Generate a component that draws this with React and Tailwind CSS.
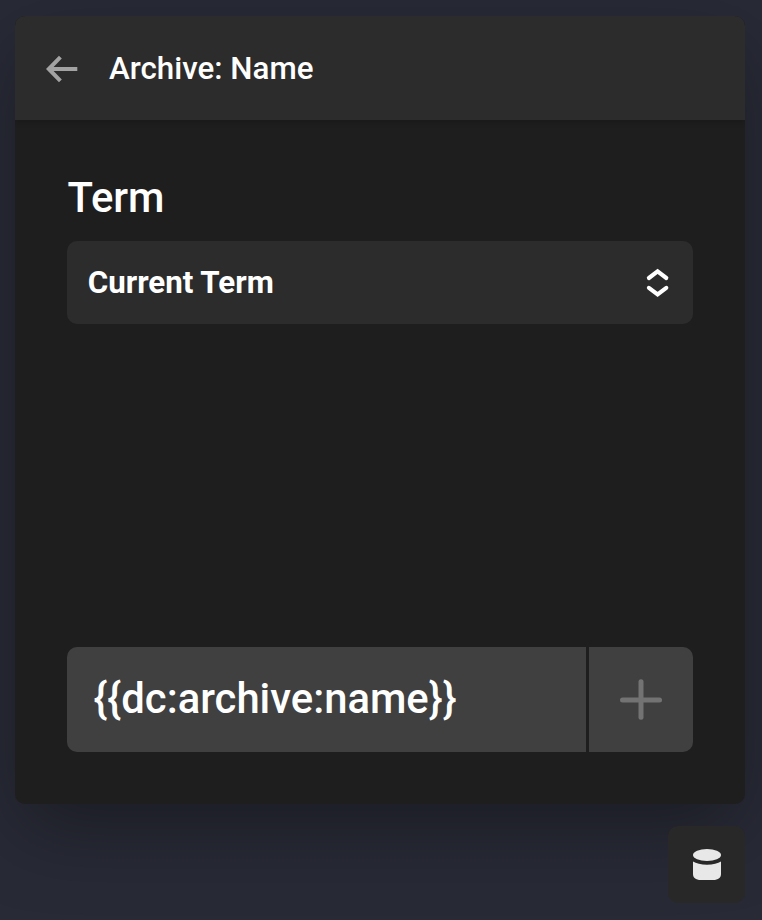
import { useState } from 'react';

function ArrowLeft() {
  return (
    <svg width="32" height="28" viewBox="0 0 32 28" fill="none" stroke="#a3a3a3" strokeWidth="4">
      <path d="M2 14H31.3" />
      <path d="M14.4 2.2L2.8 14L14.4 25.8" />
    </svg>
  );
}

function ChevronUpDown() {
  return (
    <svg width="24" height="30" viewBox="0 0 24 30" fill="none" stroke="#fff" strokeWidth="4.1" strokeLinecap="round">
      <path d="M2.9 10L11.6 3.4L20.3 10" />
      <path d="M2.9 19.8L11.6 26.4L20.3 19.8" />
    </svg>
  );
}

function Plus() {
  return (
    <svg width="42" height="42" viewBox="0 0 42 42" fill="none" stroke="#737373" strokeWidth="5" strokeLinecap="round">
      <path d="M2.5 21H39.5" />
      <path d="M21 2.8V38.2" />
    </svg>
  );
}

function Database() {
  return (
    <svg width="28" height="32" viewBox="0 0 28 32" fill="#e8e8e8">
      <ellipse cx="14" cy="6" rx="14" ry="5.9" />
      <path d="M0 12.6C3 14.6 8 15.8 14 15.8S25 14.6 28 12.6V25C28 28.6 25.5 31 20 31H8C2.5 31 0 28.6 0 25Z" />
    </svg>
  );
}

export default function App() {
  const [tag] = useState('{{dc:archive:name}}');

  return (
    <div className="flex h-[920px] w-[762px] flex-col overflow-hidden bg-[#282a36] pt-4 pr-[17px] pl-[15px] font-['Roboto',sans-serif] text-white">
      <div className="flex h-[788px] shrink-0 flex-col overflow-hidden rounded-[10px] bg-[#1e1e1e] shadow-[0_28px_80px_-4px_rgba(0,0,0,0.34)]">
        <div className="flex h-[104px] shrink-0 items-center bg-[#2c2c2c] pl-[31px] shadow-[0_2px_6px_rgba(0,0,0,0.2)]">
          <button aria-label="Back" className="mt-px">
            <ArrowLeft />
          </button>
          <h1 className="mt-[2px] ml-[31px] text-[31.3px] leading-9 font-medium">Archive: Name</h1>
        </div>

        <div className="flex flex-1 flex-col px-[52px] pt-[53px] pb-[52px]">
          <div className="h-[68px] pl-[0.4px] text-[41.8px] leading-[50px] font-medium">Term</div>
          <button className="flex h-[83px] items-center justify-between rounded-[10px] bg-[#2c2c2c] pr-[23px] pl-[20.7px]">
            <span className="text-[31.3px] leading-9 font-bold">Current Term</span>
            <ChevronUpDown />
          </button>

          <div className="mt-auto flex h-[105px] gap-[3px] overflow-hidden rounded-[10px]">
            <div className="flex flex-1 items-center bg-[#404040] pb-[2px] pl-[26.4px] text-[41.8px] leading-[50px] font-medium">
              {tag}
            </div>
            <button aria-label="Add" className="flex w-[104px] items-center justify-center bg-[#404040]">
              <Plus />
            </button>
          </div>
        </div>
      </div>

      <button
        aria-label="Dynamic data"
        className="mt-[22px] flex size-[77px] shrink-0 items-center justify-center self-end rounded-[10px] bg-[#282828]"
      >
        <Database />
      </button>
    </div>
  );
}
